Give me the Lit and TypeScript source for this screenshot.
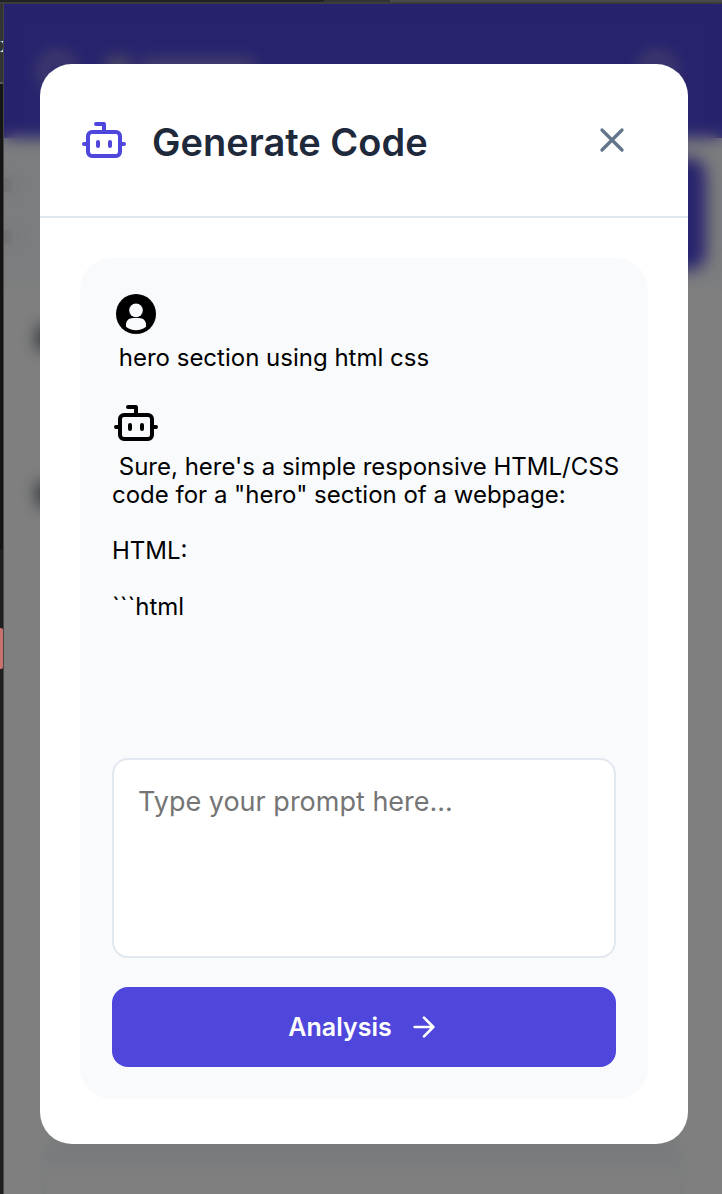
import { LitElement, html, css, svg } from "lit";
import { customElement, property, state } from "lit/decorators.js";

@customElement("bot-icon")
class BotIcon extends LitElement {
  static styles = css`
    :host { display: block; width: 48px; height: 48px; flex: none; }
    svg { display: block; width: 100%; height: 100%; }
  `;
  render() {
    return html`<svg viewBox="0 0 24 24" fill="none" stroke="currentColor" stroke-width="2"
      stroke-linecap="round" stroke-linejoin="round" aria-hidden="true">
      <path d="M12 8V4H8" /><rect width="16" height="12" x="4" y="8" rx="2" />
      <path d="M2 14h2" /><path d="M20 14h2" /><path d="M15 13v2" /><path d="M9 13v2" />
    </svg>`;
  }
}

@customElement("chat-message")
class ChatMessage extends LitElement {
  @property() author = "user";
  @property() text = "";
  static styles = css`
    :host { display: block; }
    .avatar { display: block; width: 48px; height: 48px; margin-bottom: 6px; }
    .text { margin: 0; white-space: pre-wrap; overflow-wrap: break-word; }
  `;
  render() {
    return html`
      ${this.author === "bot"
        ? html`<bot-icon class="avatar"></bot-icon>`
        : html`<svg class="avatar" viewBox="0 0 24 24" aria-hidden="true">
            <circle cx="12" cy="12" r="10" fill="#000" />
            <circle cx="12" cy="10.2" r="3.4" fill="#f8fafc" />
            <path fill="#f8fafc" d="M10.500 14h3c2 0 3.500 1.400 3.500 3.200v1.200C15.700 19.500 13.900 20.100 12 20.100S8.300 19.500 7 18.400v-1.200C7 15.400 8.500 14 10.500 14z" />
          </svg>`}
      <p class="text">${" " + this.text}</p>`;
  }
}

@customElement("app-root")
class AppRoot extends LitElement {
  @state() private messages = [
    { author: "user", text: "hero section using html css" },
    {
      author: "bot",
      text: "Sure, here's a simple responsive HTML/CSS code for a \"hero\" section of a webpage:\n\nHTML:\n\n```html",
    },
  ];

  static styles = css`
    :host {
      display: block;
      font-family: Inter, "Liberation Sans", sans-serif;
      color: #000;
    }
    * { box-sizing: border-box; }
    .desktop {
      display: grid;
      grid-template-columns: 4px minmax(0, 1fr);
      grid-template-rows: 4px minmax(0, 1fr);
      min-height: 100vh;
      background: #151515;
    }
    .top-edge {
      grid-column: 1 / -1;
      display: flex;
      background: #4b4b4b;
      border-bottom: 2px solid #3c3c3c;
    }
    .tab { width: 45%; background: #202324; border-radius: 0 0 4px 0; }
    .tab-gap { width: 9%; background: #333; }
    .side-edge {
      display: flex;
      flex-direction: column;
      border-right: 1px solid #474747;
      overflow: hidden;
    }
    .side-tools {
      height: 80px;
      padding-top: 28px;
      background: #333;
      border-bottom: 2px solid #5a5a5a;
      color: #eee;
      font-family: "Liberation Serif", serif;
      font-size: 24px;
      line-height: 24px;
    }
    .side-code { height: 466px; }
    .side-panel { flex: 1; padding-top: 78px; background: #202020; }
    .side-mark { height: 41px; background: #c97070; border-radius: 0 2px 2px 0; }
    .page, .overlay { grid-column: 2; grid-row: 2; min-width: 0; }
    .page { contain: size; background: #fff; overflow: hidden; }
    .page-header {
      display: flex;
      align-items: center;
      justify-content: space-between;
      height: 134px;
      padding: 0 48px 0 36px;
      background: #4f46db;
    }
    .brand { display: flex; align-items: center; gap: 12px; }
    .brand-mark, .menu-mark { width: 34px; height: 34px; border: 4px solid #e8e4d8; border-radius: 50%; }
    .brand-mark { margin-right: 20px; }
    .brand-word { width: 24px; height: 28px; background: #9c96c8; }
    .brand-word-long { width: 112px; height: 24px; background: #8f88d8; }
    .intro {
      display: flex;
      justify-content: space-between;
      height: 152px;
      padding: 20px 16px 0 0;
      background: #f8fafc;
    }
    .intro-lines { display: grid; align-content: start; gap: 38px; padding-top: 20px; }
    .intro-line { width: 8px; height: 14px; background: #d8dbe0; }
    .intro-action { width: 220px; height: 112px; border-radius: 16px; background: #4f46db; }
    .sections { display: grid; gap: 132px; padding: 36px 32px 0; }
    .section-title { height: 24px; width: 280px; background: #6b7280; }
    .card {
      height: 160px;
      margin: 624px 38px 0;
      border: solid #f1f5f9;
      border-width: 36px 4px 0;
      border-radius: 32px;
    }
    .overlay {
      padding: 60px 34px 50px 36px;
      background: rgba(0, 0, 0, 0.5);
      backdrop-filter: blur(8px);
    }
    .dialog { padding-bottom: 45px; background: #fff; border-radius: 32px; }
    .dialog-header {
      display: flex;
      align-items: center;
      gap: 24px;
      padding: 40px;
      border-bottom: 2px solid #e2e8f0;
    }
    .brand-icon { color: #4f46db; }
    .title {
      flex: 1;
      margin: 0;
      padding-top: 4px;
      font-size: 38px;
      line-height: 56px;
      font-weight: 600;
      color: #1e293b;
    }
    .close {
      padding: 16px;
      border: 0;
      border-radius: 16px;
      background: none;
      color: #64748b;
    }
    .close svg { display: block; width: 40px; height: 40px; }
    .panel {
      display: flex;
      flex-direction: column;
      gap: 29px;
      margin: 40px 40px 0;
      padding: 32px;
      border-radius: 32px;
      background: #f8fafc;
    }
    .messages {
      display: flex;
      flex-direction: column;
      gap: 27px;
      min-height: 439px;
      margin-right: -16px;
      font-size: 24px;
      line-height: 28px;
    }
    .prompt {
      display: block;
      width: 100%;
      height: 200px;
      padding: 22px 24px;
      border: 2px solid #e2e8f0;
      border-radius: 16px;
      background: #fff;
      color: #1e293b;
      font: inherit;
      font-size: 27px;
      line-height: 40px;
      resize: none;
    }
    .prompt::placeholder { color: #757575; opacity: 1; }
    .submit {
      display: flex;
      align-items: center;
      justify-content: center;
      gap: 16px;
      height: 80px;
      border: 0;
      border-radius: 16px;
      background: #4f46db;
      color: #fff;
      font: inherit;
      font-size: 25px;
      font-weight: 600;
    }
    .submit svg { width: 32px; height: 32px; }
  `;

  private stroke(d: string) {
    return html`<svg viewBox="0 0 24 24" fill="none" stroke="currentColor" stroke-width="2"
      stroke-linecap="round" stroke-linejoin="round" aria-hidden="true">${svg`<path d=${d} />`}</svg>`;
  }

  render() {
    return html`
      <div class="desktop">
        <div class="top-edge" aria-hidden="true"><div class="tab"></div><div class="tab-gap"></div></div>
        <div class="side-edge" aria-hidden="true">
          <div class="side-tools">x</div>
          <div class="side-code"></div>
          <div class="side-panel"><div class="side-mark"></div></div>
        </div>
        <div class="page" aria-hidden="true">
          <div class="page-header">
            <div class="brand">
              <div class="brand-mark"></div>
              <div class="brand-word"></div>
              <div class="brand-word-long"></div>
            </div>
            <div class="menu-mark"></div>
          </div>
          <div class="intro">
            <div class="intro-lines"><div class="intro-line"></div><div class="intro-line"></div></div>
            <div class="intro-action"></div>
          </div>
          <div class="sections">
            <div class="section-title"></div>
            <div class="section-title"></div>
          </div>
          <div class="card"></div>
        </div>
        <div class="overlay">
          <section class="dialog" role="dialog" aria-labelledby="title">
            <header class="dialog-header">
              <bot-icon class="brand-icon"></bot-icon>
              <h2 class="title" id="title">Generate Code</h2>
              <button class="close" type="button" aria-label="Close">${this.stroke("M18 6 6 18M6 6l12 12")}</button>
            </header>
            <div class="panel">
              <div class="messages">
                ${this.messages.map(
                  (m) => html`<chat-message .author=${m.author} .text=${m.text}></chat-message>`
                )}
              </div>
              <textarea class="prompt" aria-label="Prompt" placeholder="Type your prompt here..."></textarea>
              <button class="submit" type="button">Analysis ${this.stroke("M5 12h14M12 5l7 7-7 7")}</button>
            </div>
          </section>
        </div>
      </div>
    `;
  }
}
